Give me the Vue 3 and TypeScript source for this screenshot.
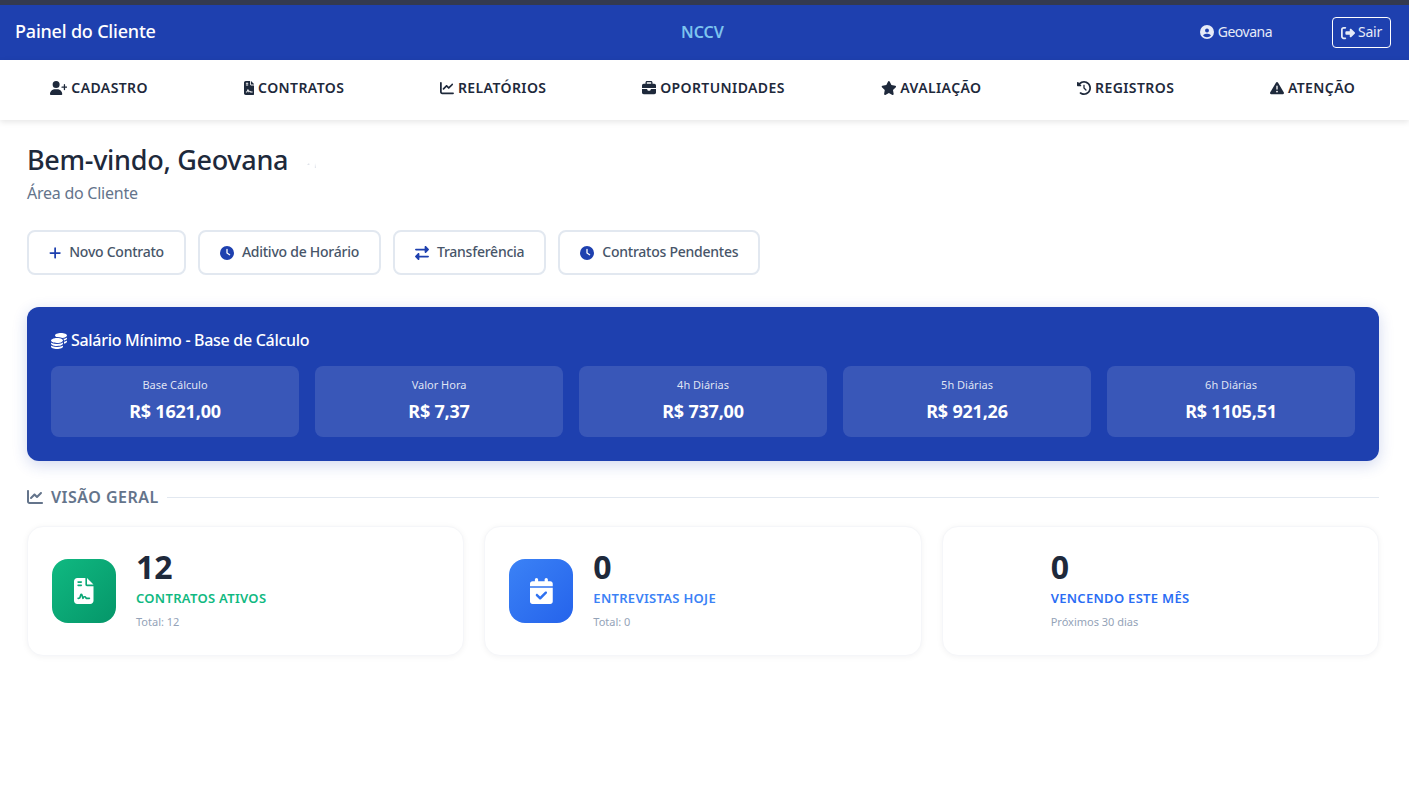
<script setup lang="ts">
// Ícones desenhados à mão (viewBox + path)
const icons: Record<string, { vb: string; d: string }> = {
  userPlus: { vb: '0 0 640 512', d: 'M96 128a128 128 0 1 1 256 0A128 128 0 1 1 96 128zM0 482.3C0 383.8 79.8 304 178.3 304h91.4C368.2 304 448 383.8 448 482.3c0 16.4-13.3 29.7-29.7 29.7H29.7C13.3 512 0 498.7 0 482.3zM504 312V248H440c-13.3 0-24-10.7-24-24s10.7-24 24-24h64V136c0-13.3 10.7-24 24-24s24 10.7 24 24v64h64c13.3 0 24 10.7 24 24s-10.7 24-24 24H552v64c0 13.3-10.7 24-24 24s-24-10.7-24-24z' },
  file: { vb: '0 0 384 512', d: 'M64 0C28.7 0 0 28.7 0 64V448c0 35.3 28.7 64 64 64H320c35.3 0 64-28.7 64-64V160H256c-17.7 0-32-14.3-32-32V0H64zM256 0V128H384L256 0zM80 64h64c8.8 0 16 7.2 16 16s-7.2 16-16 16H80c-8.8 0-16-7.2-16-16s7.2-16 16-16zm0 64h64c8.8 0 16 7.2 16 16s-7.2 16-16 16H80c-8.8 0-16-7.2-16-16s7.2-16 16-16zm54.2 253.8c-6.1 20.3-24.8 34.2-46 34.2H80c-8.8 0-16-7.2-16-16s7.2-16 16-16h8.2c7.1 0 13.3-4.6 15.3-11.4l14.9-49.5c3.4-11.3 13.8-19.1 25.6-19.1s22.2 7.7 25.6 19.1l11.6 38.6c7.4-6.2 16.8-9.7 26.8-9.7c15.9 0 30.4 9 37.5 23.2l4.4 8.8H304c8.8 0 16 7.2 16 16s-7.2 16-16 16H240c-6.1 0-11.6-3.4-14.3-8.8l-8.8-17.7c-1.7-3.4-5.1-5.5-8.8-5.5s-7.2 2.1-8.8 5.5l-8.8 17.7c-2.9 5.9-9.2 9.4-15.7 8.8s-12.1-5.1-13.9-11.3L144 349l-9.8 32.8z' },
  chart: { vb: '0 0 512 512', d: 'M64 64c0-17.7-14.3-32-32-32S0 46.3 0 64V400c0 44.2 35.8 80 80 80H480c17.7 0 32-14.3 32-32s-14.3-32-32-32H80c-8.8 0-16-7.2-16-16V64zm406.6 86.6c12.5-12.5 12.5-32.8 0-45.3s-32.8-12.5-45.3 0L320 210.7l-57.4-57.4c-12.5-12.5-32.8-12.5-45.3 0l-112 112c-12.5 12.5-12.5 32.8 0 45.3s32.8 12.5 45.3 0L240 221.3l57.4 57.4c12.5 12.5 32.8 12.5 45.3 0l128-128z' },
  briefcase: { vb: '0 0 512 512', d: 'M184 48H328c4.4 0 8 3.6 8 8V96H176V56c0-4.4 3.6-8 8-8zm-56 8V96H64C28.7 96 0 124.7 0 160v96H192 320 512V160c0-35.3-28.7-64-64-64H384V56c0-30.9-25.1-56-56-56H184c-30.9 0-56 25.1-56 56zM512 288H320v32c0 17.7-14.3 32-32 32H224c-17.7 0-32-14.3-32-32V288H0V416c0 35.3 28.7 64 64 64H448c35.3 0 64-28.7 64-64V288z' },
  star: { vb: '0 0 576 512', d: 'M316.9 18C311.6 7 300.4 0 288.1 0s-23.4 7-28.8 18L195 150.3 51.4 171.5c-12 1.8-22 10.2-25.7 21.7s-.7 24.2 7.9 32.7L137.8 329 113.2 474.7c-2 12 3 24.2 12.9 31.3s23 8 33.8 2.3l128.3-68.5 128.3 68.5c10.8 5.7 23.9 4.9 33.8-2.3s14.9-19.3 12.9-31.3L438.5 329 542.7 225.9c8.6-8.5 11.7-21.2 7.9-32.7s-13.7-19.9-25.7-21.7L381.2 150.3 316.9 18z' },
  history: { vb: '0 0 512 512', d: 'M75 75L41 41C25.9 25.9 0 36.6 0 57.9V168c0 13.3 10.7 24 24 24H134.1c21.4 0 32.1-25.9 17-41l-30.8-30.8C155 85.5 203 64 256 64c106 0 192 86 192 192s-86 192-192 192c-40.8 0-78.6-12.7-109.7-34.4c-14.5-10.1-34.4-6.6-44.6 7.9s-6.6 34.4 7.9 44.6C151.2 495 201.7 512 256 512c141.4 0 256-114.6 256-256S397.4 0 256 0C185.3 0 121.3 28.7 75 75zm181 53c-13.3 0-24 10.7-24 24V256c0 6.4 2.5 12.5 7 17l72 72c9.4 9.4 24.6 9.4 33.9 0s9.4-24.6 0-33.9l-65-65V152c0-13.3-10.7-24-24-24z' },
  warning: { vb: '0 0 512 512', d: 'M256 32c14.2 0 27.3 7.5 34.5 19.8l216 368c7.3 12.4 7.3 27.7 .2 40.1S486.3 480 472 480H40c-14.3 0-27.6-7.7-34.7-20.1s-7-27.8 .2-40.1l216-368C228.7 39.5 241.8 32 256 32zm0 128c-13.3 0-24 10.7-24 24V296c0 13.3 10.7 24 24 24s24-10.7 24-24V184c0-13.3-10.7-24-24-24zm32 224a32 32 0 1 0 -64 0 32 32 0 1 0 64 0z' },
  user: { vb: '0 0 512 512', d: 'M399 384.2C376.9 345.8 335.4 320 288 320H224c-47.4 0-88.9 25.8-111 64.2c35.2 39.2 86.2 63.8 143 63.8s107.8-24.7 143-63.8zM0 256a256 256 0 1 1 512 0A256 256 0 1 1 0 256zm256 16a72 72 0 1 0 0-144 72 72 0 1 0 0 144z' },
  logout: { vb: '0 0 512 512', d: 'M377.9 105.9L500.7 228.7c7.2 7.2 11.3 17.1 11.3 27.3s-4.1 20.1-11.3 27.3L377.9 406.1c-6.4 6.4-15 9.9-24 9.9c-18.7 0-33.9-15.2-33.9-33.9l0-62.1-128 0c-17.7 0-32-14.3-32-32l0-64c0-17.7 14.3-32 32-32l128 0 0-62.1c0-18.7 15.2-33.9 33.9-33.9c9 0 17.6 3.6 24 9.9zM160 96L96 96c-17.7 0-32 14.3-32 32l0 256c0 17.7 14.3 32 32 32l64 0c17.7 0 32 14.3 32 32s-14.3 32-32 32l-64 0c-53 0-96-43-96-96L0 128C0 75 43 32 96 32l64 0c17.7 0 32 14.3 32 32s-14.3 32-32 32z' },
  plus: { vb: '0 0 448 512', d: 'M256 80c0-17.7-14.3-32-32-32s-32 14.3-32 32V224H48c-17.7 0-32 14.3-32 32s14.3 32 32 32H192V432c0 17.7 14.3 32 32 32s32-14.3 32-32V288H400c17.7 0 32-14.3 32-32s-14.3-32-32-32H256V80z' },
  clock: { vb: '0 0 512 512', d: 'M256 0a256 256 0 1 1 0 512A256 256 0 1 1 256 0zM232 120V256c0 8 4 15.5 10.7 20l96 64c11 7.4 25.9 4.4 33.3-6.7s4.4-25.9-6.7-33.3L280 243.2V120c0-13.3-10.7-24-24-24s-24 10.7-24 24z' },
  swap: { vb: '0 0 512 512', d: 'M32 96l320 0V32c0-12.9 7.8-24.6 19.8-29.6s25.7-2.2 34.9 6.9l96 96c6 6 9.4 14.1 9.4 22.6s-3.4 16.6-9.4 22.6l-96 96c-9.2 9.2-22.9 11.9-34.9 6.9s-19.8-16.6-19.8-29.6V160L32 160c-17.7 0-32-14.3-32-32s14.3-32 32-32zM480 352c17.7 0 32 14.3 32 32s-14.3 32-32 32H160v64c0 12.9-7.8 24.6-19.8 29.6s-25.7 2.2-34.9-6.9l-96-96c-6-6-9.4-14.1-9.4-22.6s3.4-16.6 9.4-22.6l96-96c9.2-9.2 22.9-11.9 34.9-6.9s19.8 16.6 19.8 29.6l0 64H480z' },
  coins: { vb: '0 0 512 512', d: 'M512 80c0 18-14.3 34.6-38.4 48c-29.1 16.1-72.5 27.5-122.3 30.9c-3.7-1.8-7.4-3.5-11.3-5C300.6 137.4 248.2 128 192 128c-8.3 0-16.4 .2-24.5 .6l-1.1-.6C142.3 114.6 128 98 128 80c0-44.2 86-80 192-80S512 35.8 512 80zM160.7 161.1c10.2-.7 20.7-1.1 31.3-1.1c62.2 0 117.4 12.3 152.5 31.4C369.3 204.9 384 221.7 384 240c0 4-.7 7.9-2.1 11.7c-4.6 13.2-17 25.3-35 35.5c-.1 .1-.3 .1-.4 .2c-.3 .2-.6 .3-.9 .5c-35 19.4-90.8 32-153.6 32c-59.6 0-112.9-11.3-148.2-29.1c-1.9-.9-3.7-1.9-5.5-2.9C14.3 274.6 0 258 0 240c0-34.8 53.4-64.5 128-75.4c10.5-1.5 21.4-2.7 32.7-3.5zM416 240c0-21.9-10.6-39.9-24.1-53.4c28.3-4.4 54.2-11.4 76.2-20.5c16.3-6.8 31.5-15.2 43.9-25.5V176c0 19.3-16.5 37.1-43.8 50.9c-14.6 7.4-32.4 13.7-52.4 18.5c.1-1.8 .2-3.5 .2-5.3zm-32 96c0 18-14.3 34.6-38.4 48c-1.8 1-3.6 1.9-5.5 2.9C304.9 404.7 251.6 416 192 416c-62.8 0-118.6-12.6-153.6-32C14.3 370.6 0 354 0 336V300.6c12.5 10.3 27.6 18.7 43.9 25.5C83.4 342.6 135.8 352 192 352s108.6-9.4 148.1-25.9c7.8-3.2 15.3-6.9 22.4-10.9c6.1-3.4 11.8-7.2 17.2-11.2c1.5-1.1 2.9-2.3 4.3-3.4V304v5.7V336zm32 0V304 278.1c19-4.2 36.5-9.5 52.1-16c16.3-6.8 31.5-15.2 43.9-25.5V272c0 10.5-5 21-14.9 30.9c-16.3 16.3-45 29.7-81.3 38.4c.1-1.7 .2-3.5 .2-5.3zM192 448c56.2 0 108.6-9.4 148.1-25.9c16.3-6.8 31.5-15.2 43.9-25.5V432c0 44.2-86 80-192 80S0 476.2 0 432V396.6c12.5 10.3 27.6 18.7 43.9 25.5C83.4 438.6 135.8 448 192 448z' },
  calendar: { vb: '0 0 448 512', d: 'M128 0c17.7 0 32 14.3 32 32V64H288V32c0-17.7 14.3-32 32-32s32 14.3 32 32V64h48c26.5 0 48 21.5 48 48v48H0V112C0 85.5 21.5 64 48 64H96V32c0-17.7 14.3-32 32-32zM0 192H448V464c0 26.5-21.5 48-48 48H48c-26.5 0-48-21.5-48-48V192zM329 305c9.4-9.4 9.4-24.6 0-33.9s-24.6-9.4-33.9 0l-95 95-47-47c-9.4-9.4-24.6-9.4-33.9 0s-9.4 24.6 0 33.9l64 64c9.4 9.4 24.6 9.4 33.9 0L329 305z' },
};

const menu = [
  { label: 'Cadastro', icon: 'userPlus' },
  { label: 'Contratos', icon: 'file' },
  { label: 'Relatórios', icon: 'chart' },
  { label: 'Oportunidades', icon: 'briefcase' },
  { label: 'Avaliação', icon: 'star' },
  { label: 'Registros', icon: 'history' },
  { label: 'Atenção', icon: 'warning' },
];

const actions = [
  { label: 'Novo Contrato', icon: 'plus' },
  { label: 'Aditivo de Horário', icon: 'clock' },
  { label: 'Transferência', icon: 'swap' },
  { label: 'Contratos Pendentes', icon: 'clock' },
];

const salary = [
  { label: 'Base Cálculo', value: 'R$ 1621,00' },
  { label: 'Valor Hora', value: 'R$ 7,37' },
  { label: '4h Diárias', value: 'R$ 737,00' },
  { label: '5h Diárias', value: 'R$ 921,26' },
  { label: '6h Diárias', value: 'R$ 1105,51' },
];

const stats = [
  { value: '12', label: 'Contratos Ativos', sub: 'Total: 12', tone: 'green', icon: 'file' },
  { value: '0', label: 'Entrevistas Hoje', sub: 'Total: 0', tone: 'blue', icon: 'calendar' },
  { value: '0', label: 'Vencendo Este Mês', sub: 'Próximos 30 dias', tone: 'azure', icon: '' },
];
</script>

<template>
  <div class="page">
    <header class="topbar">
      <span class="brand">Painel do Cliente</span>
      <span class="org">NCCV</span>
      <div class="account">
        <span class="who">
          <svg class="ico" :viewBox="icons.user.vb"><path :d="icons.user.d" /></svg>
          Geovana
        </span>
        <button class="logout">
          <svg class="ico" :viewBox="icons.logout.vb"><path :d="icons.logout.d" /></svg>
          <span>Sair</span>
        </button>
      </div>
    </header>

    <nav class="menu">
      <a v-for="item in menu" :key="item.label" class="menu-item">
        <svg class="ico" :viewBox="icons[item.icon].vb"><path :d="icons[item.icon].d" /></svg>
        {{ item.label }}
      </a>
    </nav>

    <main class="content">
      <h1>
        Bem-vindo, Geovana
        <!-- resto quase invisível do emoji de saudação -->
        <svg class="wave" viewBox="0 0 12 8"><path d="M1 4l2-2 .6 2zM9 2l1 5h-1.200z" /></svg>
      </h1>
      <p class="subtitle">Área do Cliente</p>

      <div class="actions">
        <button v-for="a in actions" :key="a.label" class="action">
          <svg class="ico" :viewBox="icons[a.icon].vb"><path :d="icons[a.icon].d" /></svg>
          <span>{{ a.label }}</span>
        </button>
      </div>

      <section class="salary">
        <h2>
          <svg class="ico" :viewBox="icons.coins.vb"><path :d="icons.coins.d" /></svg>
          Salário Mínimo - Base de Cálculo
        </h2>
        <div class="salary-grid">
          <div v-for="s in salary" :key="s.label" class="salary-item">
            <span class="salary-label">{{ s.label }}</span>
            <strong class="salary-value">{{ s.value }}</strong>
          </div>
        </div>
      </section>

      <div class="section-title">
        <svg class="ico" :viewBox="icons.chart.vb"><path :d="icons.chart.d" /></svg>
        <span>Visão Geral</span>
        <i class="rule"></i>
      </div>

      <div class="stats">
        <div v-for="c in stats" :key="c.label" class="stat" :class="c.tone">
          <div class="stat-icon">
            <svg v-if="c.icon" class="ico" :viewBox="icons[c.icon].vb"><path :d="icons[c.icon].d" /></svg>
          </div>
          <div class="stat-body">
            <div class="stat-value">{{ c.value }}</div>
            <div class="stat-label">{{ c.label }}</div>
            <div class="stat-sub">{{ c.sub }}</div>
          </div>
        </div>
      </div>
    </main>
  </div>
</template>

<style scoped>
.page {
  min-height: 794px;
  background: #fff;
  border-top: 5px solid #343a4f;
  box-sizing: border-box;
  font-family: "Noto Sans", "Open Sans", sans-serif;
  color: #1e293b;
}

.ico {
  height: 1em;
  width: auto;
  fill: currentColor;
  flex: none;
}

.topbar {
  height: 55px;
  background: #1e40af;
  display: flex;
  align-items: center;
  justify-content: space-between;
  padding: 0 18px 0 15px;
  color: #fff;
  position: relative;
}

.brand {
  margin-top: -4px;
  font-size: 18px;
  font-weight: 500;
  letter-spacing: -0.2px;
}

.org {
  position: absolute;
  left: 681px;
  top: 16px;
  font-size: 16px;
  font-weight: 600;
  color: #7dc4ee;
}

.account {
  display: flex;
  align-items: center;
  gap: 60px;
}

.who {
  margin-top: -2px;
  display: flex;
  align-items: center;
  gap: 4px;
  font-size: 14px;
  letter-spacing: -0.5px;
  color: #e6ebf7;
}

.logout {
  height: 31px;
  width: 59px;
  padding: 0;
  display: flex;
  align-items: center;
  justify-content: center;
  gap: 3px;
  background: transparent;
  border: 1px solid #fff;
  border-radius: 4px;
  color: #e6ebf7;
  font: inherit;
  font-size: 14px;
  letter-spacing: -0.2px;
}

.logout span {
  margin-top: -2px;
}

.menu {
  height: 60px;
  background: #fff;
  display: flex;
  align-items: center;
  justify-content: space-around;
  padding: 0 6px 0 2px;
  box-shadow: 0 2px 6px rgba(0, 0, 0, 0.1);
  position: relative;
}

.menu-item {
  margin-top: -5px;
  display: flex;
  align-items: center;
  gap: 4px;
  font-size: 14px;
  font-weight: 600;
  letter-spacing: 0.4px;
  text-transform: uppercase;
  color: #1e293b;
}

.content {
  padding: 22px 30px 0 27px;
}

h1 {
  margin: 0;
  display: flex;
  align-items: center;
  font-size: 27px;
  line-height: 36px;
  font-weight: 500;
  letter-spacing: -0.3px;
  color: #1e293b;
}

.wave {
  width: 12px;
  height: 8px;
  margin: 10px 0 0 18px;
  fill: #dfe3ea;
}

.subtitle {
  margin: 3px 0 0;
  font-size: 16px;
  line-height: 24px;
  letter-spacing: -0.25px;
  color: #64748b;
}

.actions {
  display: flex;
  gap: 12px;
  margin-top: 25px;
}

.action {
  height: 45px;
  padding: 0 20px;
  display: flex;
  align-items: center;
  gap: 8px;
  background: #fff;
  border: 2px solid #e2e8f0;
  border-radius: 8px;
  color: #475569;
  font: inherit;
  font-size: 14px;
  font-weight: 500;
  letter-spacing: -0.25px;
}

.action span {
  margin-top: -2px;
}

.action .ico {
  color: #1e40af;
}

.salary {
  margin-top: 32px;
  height: 154px;
  box-sizing: border-box;
  padding: 24px;
  background: #1e40af;
  border-radius: 12px;
  box-shadow: 0 4px 15px rgba(30, 64, 175, 0.2);
  color: #fff;
}

.salary h2 {
  margin: 0 0 16px;
  height: 19px;
  display: flex;
  align-items: center;
  gap: 4px;
  font-size: 16px;
  line-height: 19px;
  font-weight: 500;
  letter-spacing: -0.3px;
}

.salary-grid {
  display: grid;
  grid-template-columns: repeat(5, 1fr);
  gap: 16px;
}

.salary-item {
  height: 71px;
  box-sizing: border-box;
  padding-top: 11px;
  display: flex;
  flex-direction: column;
  align-items: center;
  gap: 6px;
  background: rgba(255, 255, 255, 0.12);
  border-radius: 8px;
}

.salary-label {
  font-size: 11px;
  line-height: 16px;
  color: rgba(255, 255, 255, 0.85);
}

.salary-value {
  font-size: 18px;
  line-height: 24px;
  font-weight: 700;
  letter-spacing: -0.2px;
}

.section-title {
  margin-top: 24px;
  height: 24px;
  display: flex;
  align-items: center;
  gap: 8px;
  font-size: 16px;
  font-weight: 600;
  letter-spacing: 0.5px;
  text-transform: uppercase;
  color: #64748b;
}

.rule {
  flex: 1;
  height: 1px;
  background: #e2e8f0;
}

.stats {
  margin-top: 17px;
  display: grid;
  grid-template-columns: repeat(3, 1fr);
  gap: 20px;
}

.stat {
  height: 130px;
  box-sizing: border-box;
  padding: 0 24px;
  display: flex;
  align-items: center;
  gap: 20px;
  background: #fff;
  border: 1px solid #f5f6f9;
  border-radius: 16px;
  box-shadow: 0 1px 6px rgba(15, 23, 42, 0.05);
}

.stat-icon {
  width: 64px;
  height: 64px;
  flex: none;
  border-radius: 16px;
  display: flex;
  align-items: center;
  justify-content: center;
  color: #fff;
  font-size: 26px;
}

.green .stat-icon {
  background: linear-gradient(135deg, #10b981, #059669);
}

.blue .stat-icon {
  background: linear-gradient(135deg, #3b82f6, #2563eb);
}

.stat-body {
  margin-bottom: 4px;
}

.stat-value {
  font-size: 32px;
  line-height: 38px;
  font-weight: 700;
  color: #1e293b;
}

.stat-label {
  margin-top: 3px;
  font-size: 13px;
  line-height: 18px;
  font-weight: 600;
  letter-spacing: 0.3px;
  text-transform: uppercase;
}

.green .stat-label {
  color: #10b981;
}

.blue .stat-label {
  color: #3b82f6;
}

.azure .stat-label {
  color: #2a6df4;
}

.stat-sub {
  margin-top: 7px;
  font-size: 11px;
  line-height: 16px;
  color: #94a3b8;
}
</style>
